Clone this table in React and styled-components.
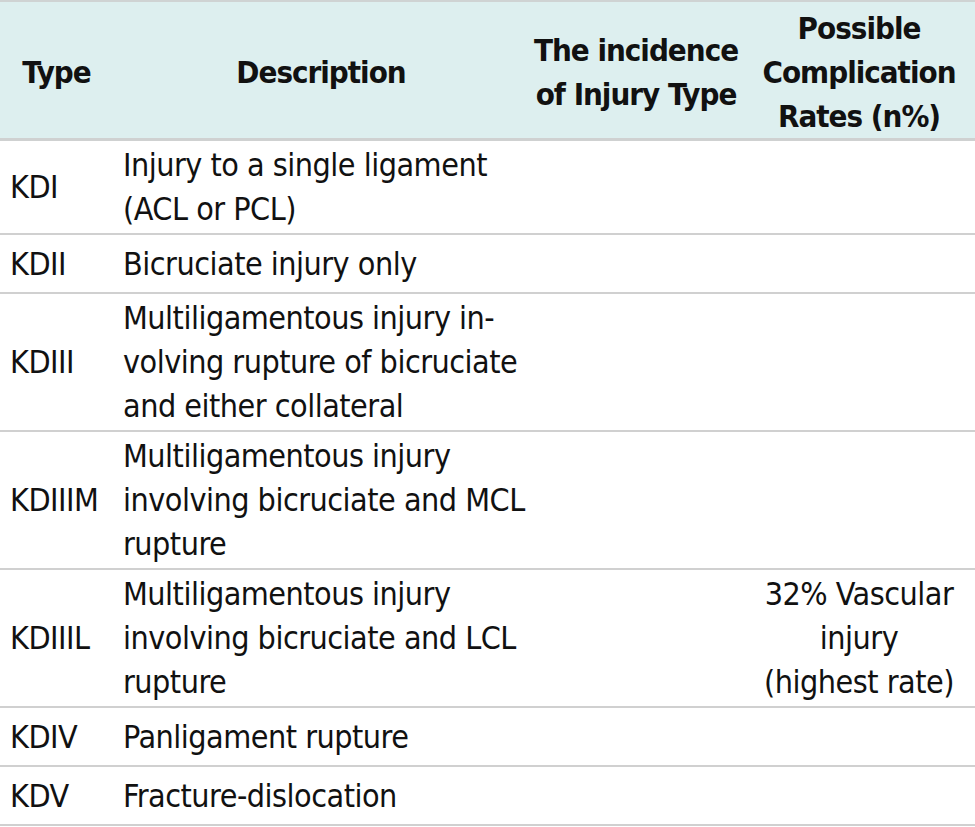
import styled, { createGlobalStyle } from "styled-components";

const GlobalStyle = createGlobalStyle`
  html, body {
    margin: 0;
    padding: 0;
    background: #ffffff;
  }
  body {
    font-family: "DejaVu Sans Condensed", "Liberation Sans Narrow", Roboto, sans-serif;
    color: #111111;
  }
`;

const Table = styled.table`
  width: 975px;
  border-collapse: collapse;
  table-layout: fixed;
  border-top: 2px solid #cfd3d3;
  font-size: 32px;
  line-height: 44px;
  letter-spacing: -0.5px;
`;

const HeadCell = styled.th`
  box-sizing: border-box;
  background: #ddefef;
  font-weight: 700;
  font-size: 31px;
  letter-spacing: -1px;
  text-align: center;
  vertical-align: middle;
  height: 137px;
  padding: 4px 4px 0;
  border-bottom: 3px solid #cfd1d1;
  white-space: nowrap;
  width: ${(props) => props.$w}px;
`;

const Row = styled.tr`
  border-bottom: 2px solid #d0d0d0;
`;

const Cell = styled.td`
  box-sizing: border-box;
  vertical-align: middle;
  text-align: ${(props) => (props.$center ? "center" : "left")};
  padding: ${(props) => (props.$center ? "2px 4px" : "2px 10px")};
  height: 59px;
  white-space: nowrap;
`;

const rows = [
  { type: "KDI", desc: ["Injury to a single ligament", "(ACL or PCL)"] },
  { type: "KDII", desc: ["Bicruciate injury only"] },
  {
    type: "KDIII",
    desc: [
      "Multiligamentous injury in-",
      "volving rupture of bicruciate",
      "and either collateral",
    ],
  },
  {
    type: "KDIIIM",
    desc: [
      "Multiligamentous injury",
      "involving bicruciate and MCL",
      "rupture",
    ],
  },
  {
    type: "KDIIIL",
    desc: [
      "Multiligamentous injury",
      "involving bicruciate and LCL",
      "rupture",
    ],
    rate: ["32% Vascular", "injury", "(highest rate)"],
  },
  { type: "KDIV", desc: ["Panligament rupture"] },
  { type: "KDV", desc: ["Fracture-dislocation"] },
];

function lines(list) {
  return list.map((line, i) => (
    <span key={i}>
      {i > 0 && <br />}
      {line}
    </span>
  ));
}

function App() {
  return (
    <>
      <GlobalStyle />
      <Table>
        <thead>
          <tr>
            <HeadCell $w={113}>Type</HeadCell>
            <HeadCell $w={416}>Description</HeadCell>
            <HeadCell $w={214}>
              The incidence
              <br />
              of Injury Type
            </HeadCell>
            <HeadCell $w={232}>
              Possible
              <br />
              Complication
              <br />
              Rates (n%)
            </HeadCell>
          </tr>
        </thead>
        <tbody>
          {rows.map((row) => (
            <Row key={row.type}>
              <Cell>{row.type}</Cell>
              <Cell>{lines(row.desc)}</Cell>
              <Cell $center />
              <Cell $center>{row.rate ? lines(row.rate) : null}</Cell>
            </Row>
          ))}
        </tbody>
      </Table>
    </>
  );
}

export default App;
